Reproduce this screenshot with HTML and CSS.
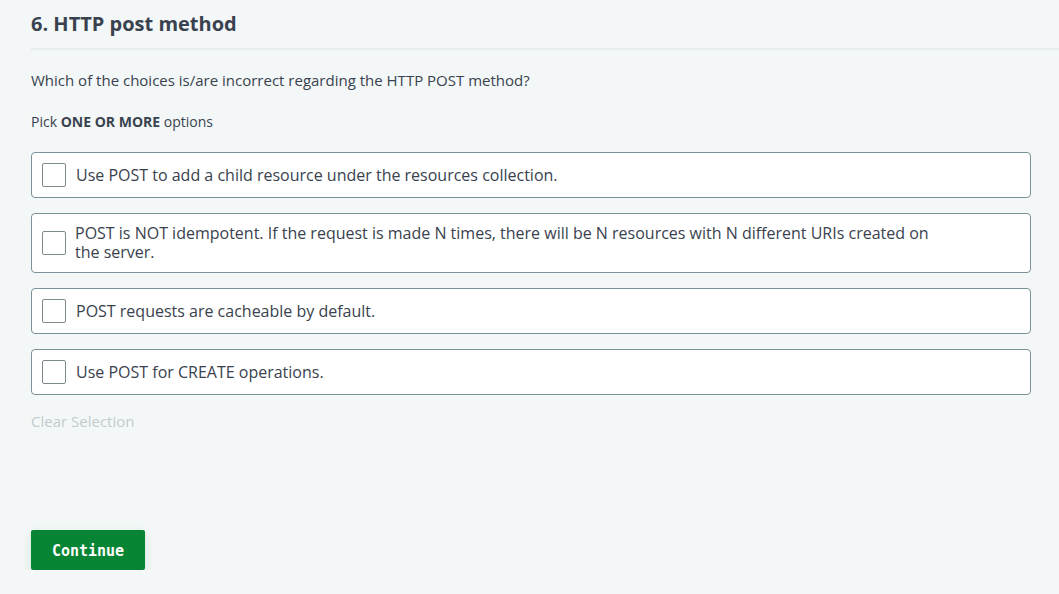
FILE: index.html
```html
<!DOCTYPE html>
<html>
<head>
<meta charset="utf-8">
<link rel="stylesheet" href="styles.css">
</head>
<body>
<div class="page">
  <h1 class="title">6. HTTP post method</h1>
  <div class="rule"></div>
  <p class="question">Which of the choices is/are incorrect regarding the HTTP POST method?</p>
  <p class="pick">Pick <strong>ONE OR MORE</strong> options</p>
  <div class="options">
    <label class="option"><span class="box"></span><span class="text">Use POST to add a child resource under the resources collection.</span></label>
    <label class="option"><span class="box"></span><span class="text wrap">POST is NOT idempotent. If the request is made N times, there will be N resources with N different URIs created on the server.</span></label>
    <label class="option"><span class="box"></span><span class="text">POST requests are cacheable by default.</span></label>
    <label class="option"><span class="box"></span><span class="text">Use POST for CREATE operations.</span></label>
  </div>
  <div class="clear">Clear Selection</div>
  <button class="continue">Continue</button>
</div>
</body>
</html>
```
FILE: styles.css
```css
html, body {
  margin: 0;
  padding: 0;
  background: #f3f7f7;
}
body {
  font-family: "Open Sans", "Noto Sans", sans-serif;
  color: #39424e;
}
.page {
  padding: 10px 0 0 31px;
}
.title {
  margin: 0;
  font-size: 20px;
  font-weight: 700;
  line-height: 27px;
}
.rule {
  height: 2px;
  background: #e6ebed;
  margin-top: 11px;
}
.question {
  margin: 20px 0 0;
  font-size: 15px;
  line-height: 21px;
}
.pick {
  margin: 21px 0 0;
  font-size: 14px;
  line-height: 19px;
}
.pick strong { font-weight: 700; }
.options {
  margin-top: 21px;
  width: 1000px;
  display: flex;
  flex-direction: column;
  gap: 15px;
}
.option {
  display: flex;
  align-items: center;
  min-height: 46px;
  box-sizing: border-box;
  background: #fff;
  border: 1px solid #7a9299;
  border-radius: 4px;
  padding: 10px 10px;
}
.box {
  width: 22px;
  height: 22px;
  border: 1px solid #7d8a8e;
  border-radius: 2px;
  flex: none;
  background: #fff;
}
.text {
  margin-left: 10px;
  font-size: 16px;
  line-height: 19px;
}
.text.wrap {
  margin-left: 9px;
  max-width: 865px;
}
.clear {
  margin-top: 16px;
  font-size: 15px;
  color: #c2cccd;
  line-height: 20px;
}
.continue {
  display: block;
  margin-top: 99px;
  width: 114px;
  height: 40px;
  padding: 2px 0 0;
  border: none;
  border-radius: 2px;
  background: #088534;
  color: #fff;
  font-family: "DejaVu Sans Mono", monospace;
  font-weight: 700;
  font-size: 15px;
  box-shadow: 0 3px 10px rgba(8, 133, 52, 0.15);
  cursor: pointer;
}
```
